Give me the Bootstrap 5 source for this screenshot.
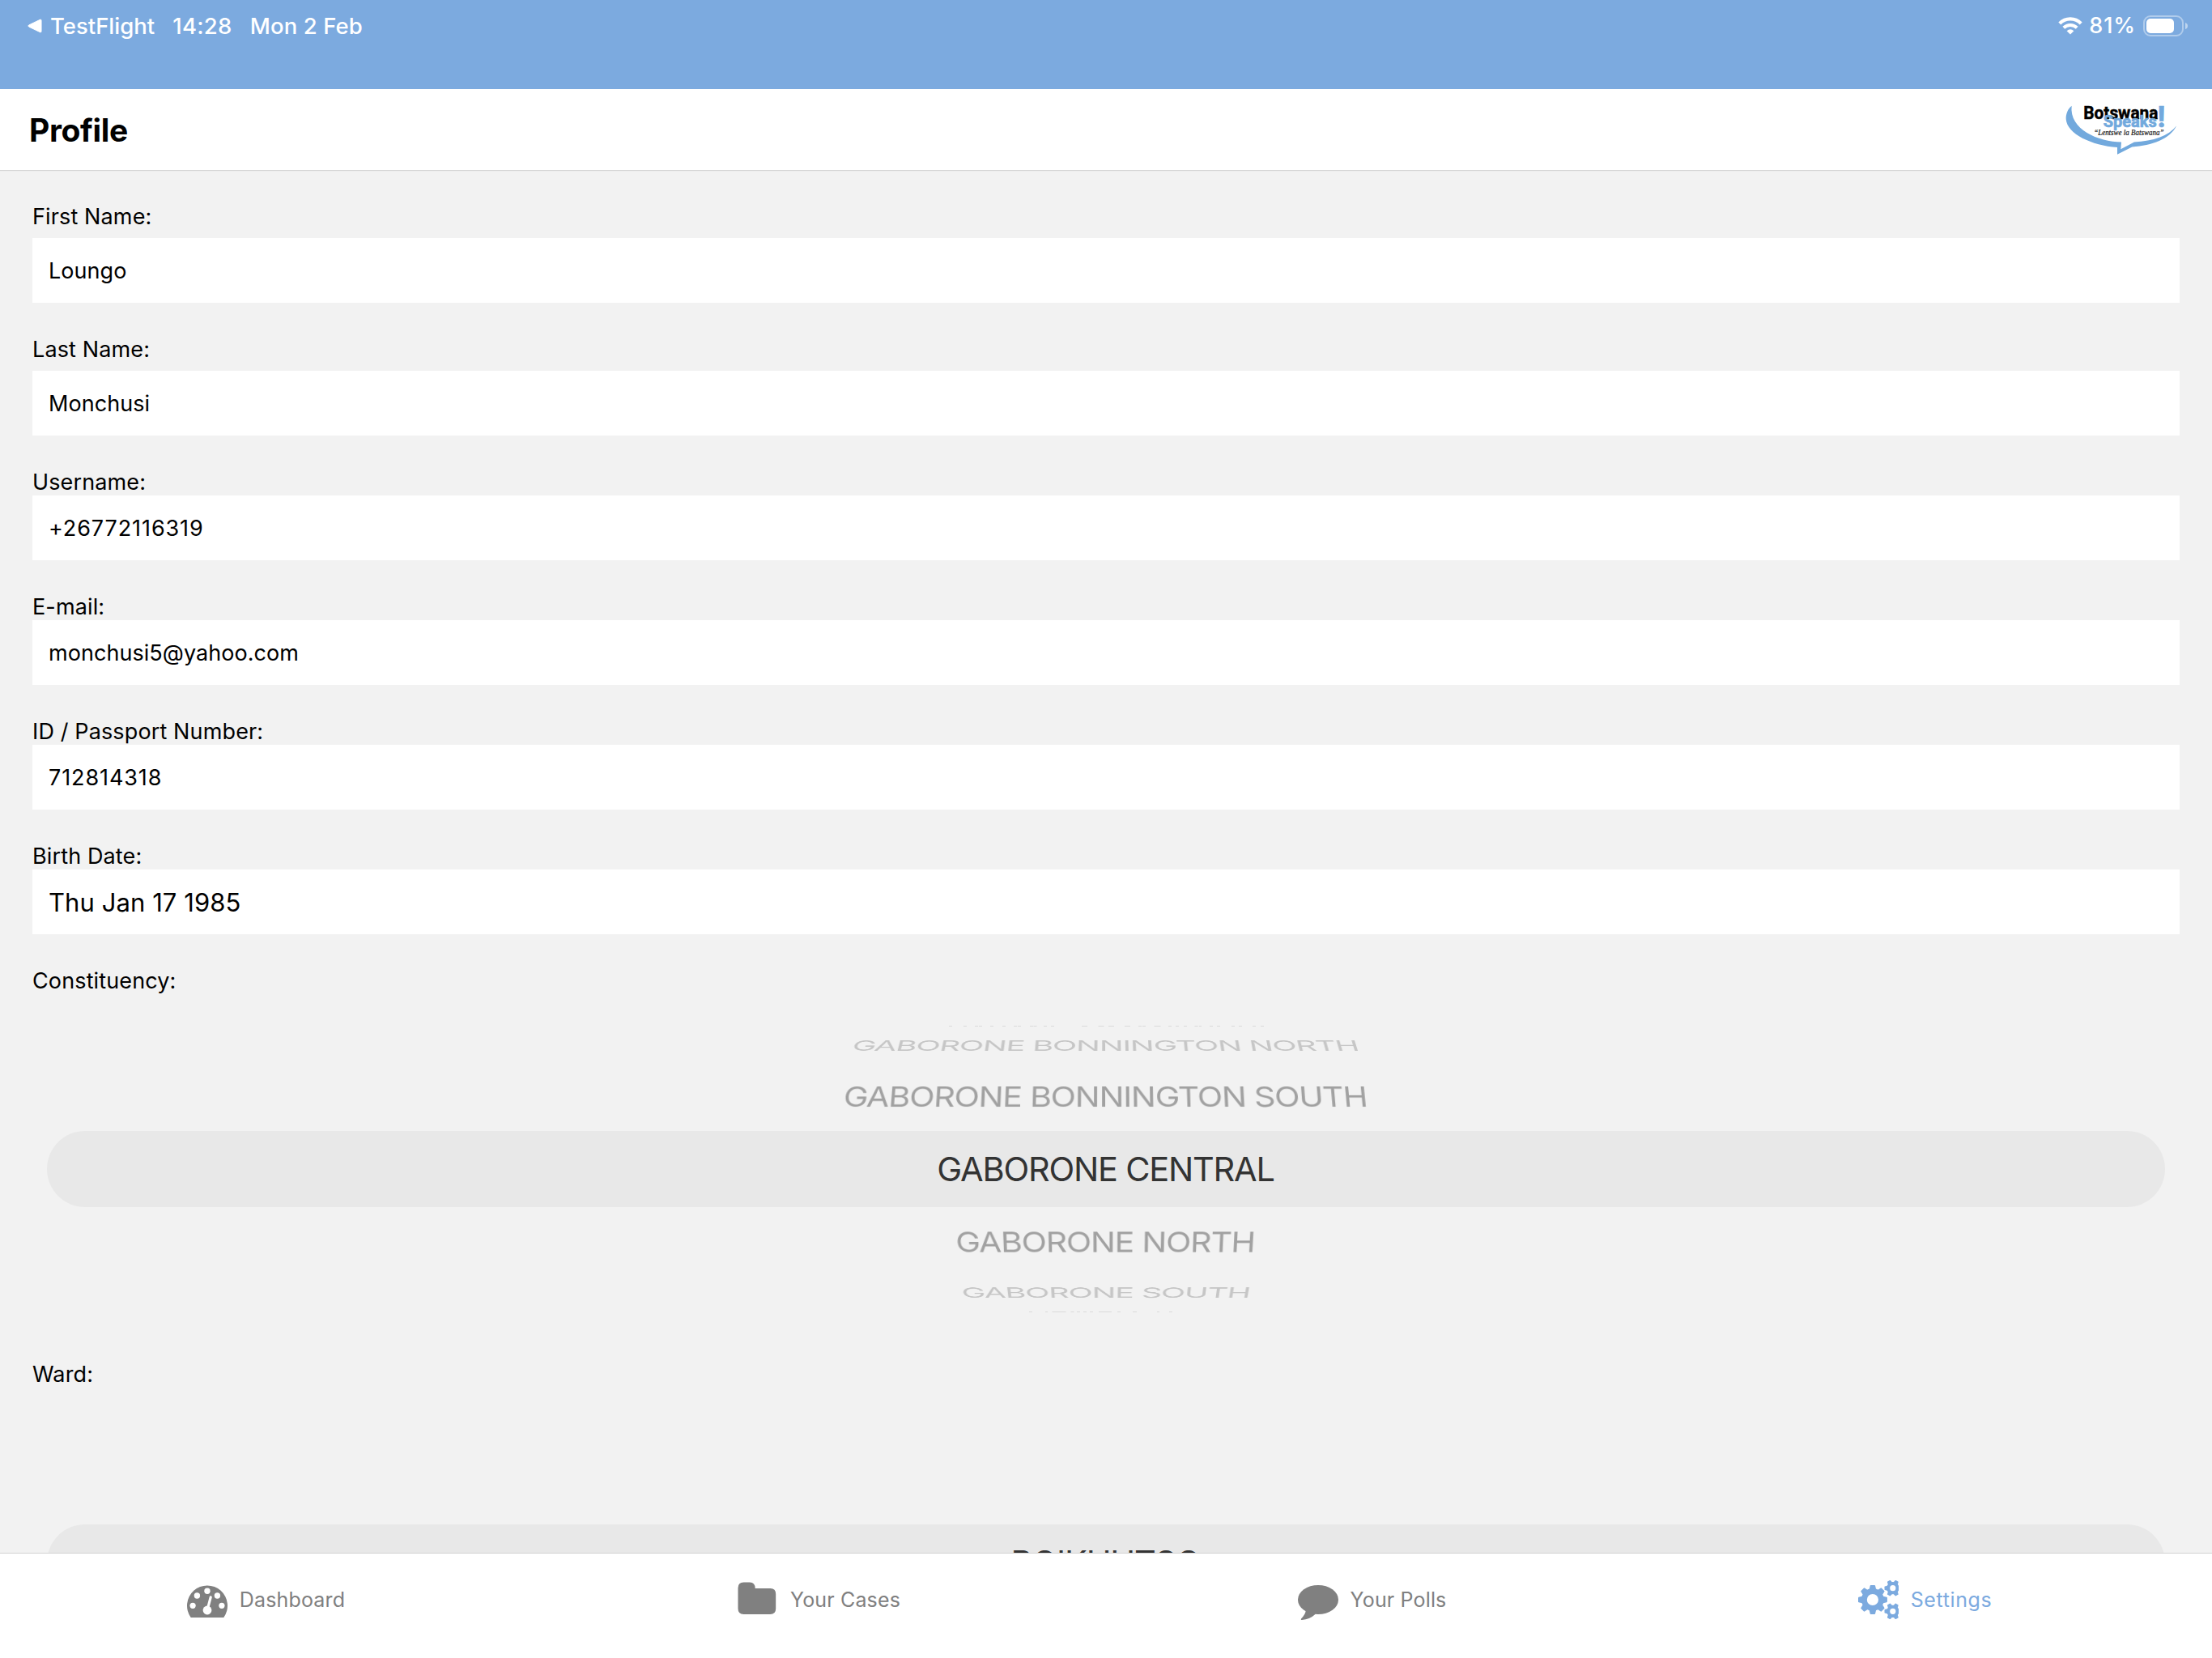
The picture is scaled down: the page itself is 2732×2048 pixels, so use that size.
<!DOCTYPE html>
<html lang="en">
<head>
<meta charset="utf-8">
<meta name="viewport" content="width=device-width, initial-scale=1">
<title>Profile</title>
<link rel="stylesheet" href="https://cdn.jsdelivr.net/npm/bootstrap@5.3.0/dist/css/bootstrap.min.css">
<style>
  body { font-family: Inter, "Open Sans", sans-serif; font-size: 27px; line-height: 34px; letter-spacing: .13px; color: #000; background: #f2f2f2; }
  .status-bar { height: 110px; background: #7caadf; color: #fff; font-size: 27.5px; font-weight: 500; letter-spacing: 0; padding: 0 29px 0 34px; }
  .status-row { height: 64px; }
  .back-app { gap: 10px; margin-right: 22px; }
  .clock { margin-right: 22px; letter-spacing: .3px; }
  .clock + span { letter-spacing: .1px; }
  .percent { margin: 0 9px 0 8px; letter-spacing: .9px; font-size: 27px; }
  .title-bar { height: 100px; background: #fff; padding: 0 42px 0 36px; box-shadow: 0 1px 1px #d5d5d5; }
  .title-bar h1 { font-size: 39px; font-weight: 700; letter-spacing: -.35px; line-height: 48px; padding-top: 1px; }
  .title-bar svg { margin-top: 1px; }
  .profile-form { padding: 40px 40px 0; }
  .field { margin-bottom: 40px; }
  .field label, .picker-label { display: block; height: 34px; line-height: 36px; }
  .field.spaced label { margin-bottom: 10px; }
  .field .form-control { height: 80px; padding: 0 20px; border: 0; font-size: 27px; letter-spacing: .05px; color: #000; background: #fff; }
  .field .form-control.digits { letter-spacing: .9px; }
  .field .form-control.birth { font-size: 31px; letter-spacing: .08px; }
  .wheel { display: grid; height: 432px; margin: 0 18px 20px; align-items: center; justify-items: center; }
  .wheel > * { grid-area: 1 / 1; }
  .wheel .band { width: 100%; height: 94px; background: #e8e8e8; }
  .wheel .item { font-size: 41.5px; line-height: 60px; letter-spacing: -1.22px; white-space: nowrap; color: #333; margin-right: 1px; }
  .wheel .near { color: #a1a1a1; }
  .wheel .far { color: #c6c6c6; }
  .wheel .up1 { transform: perspective(1860px) translateZ(-187px) rotateX(29deg) translateZ(187px); }
  .wheel .up2 { transform: perspective(1860px) translateZ(-187px) rotateX(58.8deg) translateZ(187px); }
  .wheel .down1 { transform: perspective(1860px) translateZ(-187px) rotateX(-29.2deg) translateZ(187px); }
  .wheel .down2 { transform: perspective(1860px) translateZ(-187px) rotateX(-58.9deg) translateZ(187px); }
  .tab-bar { height: 130px; background: #fff; border-top: 1px solid #d2d2d2; padding-bottom: 15px; font-size: 25px; letter-spacing: .15px; color: #808080; z-index: 5; }
  .tab-bar a { color: inherit; text-decoration: none; padding: 0 26px 0 0; gap: 15px; }
  .tab-bar a.active { color: #7caadf; letter-spacing: .6px; }
</style>
<script src="https://cdn.jsdelivr.net/npm/bootstrap@5.3.0/dist/js/bootstrap.bundle.min.js"></script>
</head>
<body>
<div class="vh-100 d-flex flex-column overflow-hidden">
  <div class="status-bar flex-shrink-0">
    <div class="status-row d-flex align-items-center justify-content-between">
      <div class="d-flex align-items-center">
        <span class="back-app d-flex align-items-center">
          <svg width="18" height="18" viewBox="0 0 18 18"><path d="M1.600 8 15.500 1.300Q17 .7 17 2.200V15.800Q17 17.300 15.500 16.700L1.600 10Q0 9 1.600 8Z" fill="#fff" stroke="#fff" stroke-width="1"/></svg>
          <span>TestFlight</span>
        </span>
        <span class="clock">14:28</span>
        <span>Mon 2 Feb</span>
      </div>
      <div class="d-flex align-items-center">
        <svg width="30" height="22" viewBox="0 0 30 22" fill="none" stroke="#fff"><path d="M1.800 8A18.500 18.500 0 0 1 28.200 8" stroke-width="4.200"/><path d="M6.800 13.200A11.800 11.800 0 0 1 23.200 13.200" stroke-width="4"/><path d="M10.600 17.200Q15 13.400 19.400 17.200L15 21.500Z" fill="#fff" stroke="none"/></svg>
        <span class="percent">81%</span>
        <svg width="56" height="26" viewBox="0 0 56 26"><rect x="1" y="1" width="48" height="24" rx="8" fill="none" stroke="#fff" stroke-opacity=".4" stroke-width="2"/><rect x="4" y="4" width="34" height="18" rx="5" fill="#fff"/><path d="M52 9Q55 10 55 13T52 17Z" fill="#fff" fill-opacity=".5"/></svg>
      </div>
    </div>
  </div>

  <header class="title-bar flex-shrink-0 d-flex align-items-center justify-content-between position-relative">
    <h1 class="mb-0">Profile</h1>
    <svg width="140" height="63" viewBox="150 385 420 190" overflow="visible">
      <path d="M175 390C161 401 153 420 154 440C158 495 250 538 345 545V571L400 543C475 537 540 515 566 464C535 503 480 521 408 525L358 552L360 525C275 524 165 478 175 390Z" fill="#72a9dd"/>
      <text x="219" y="438" font-family="Roboto" font-weight="700" font-size="68" letter-spacing="0" textLength="278" lengthAdjust="spacingAndGlyphs" stroke="#000" stroke-width="1.500">Botswana</text>
      <g fill="#72a9dd" font-family="Roboto" font-weight="700" letter-spacing="0" stroke="#72a9dd" stroke-width="2">
        <text x="293" y="470" font-size="62" textLength="199" lengthAdjust="spacingAndGlyphs">Speaks</text>
        <text x="494" y="470" font-size="112" textLength="30" lengthAdjust="spacingAndGlyphs">!</text>
      </g>
      <text x="258" y="501" font-family="Liberation Serif" font-style="italic" font-size="30" letter-spacing="0" textLength="260" lengthAdjust="spacingAndGlyphs" fill="#111" stroke="#111" stroke-width=".6">“Lentswe la Batswana”</text>
    </svg>
  </header>

  <main class="profile-form flex-grow-1 overflow-hidden">
    <div class="field spaced"><label for="first">First Name:</label><input id="first" class="form-control rounded-0" value="Loungo"></div>
    <div class="field spaced"><label for="last">Last Name:</label><input id="last" class="form-control rounded-0" value="Monchusi"></div>
    <div class="field"><label for="user">Username:</label><input id="user" class="form-control rounded-0 digits" value="+26772116319"></div>
    <div class="field"><label for="mail">E-mail:</label><input id="mail" class="form-control rounded-0" value="monchusi5@yahoo.com"></div>
    <div class="field"><label for="pass">ID / Passport Number:</label><input id="pass" class="form-control rounded-0 digits" value="712814318"></div>
    <div class="field"><label for="birth">Birth Date:</label><input id="birth" class="form-control rounded-0 birth" value="Thu Jan 17 1985"></div>

    <div class="picker-label">Constituency:</div>
    <div class="wheel">
      <div class="band rounded-pill"></div>
      <!-- rows turning over the rim of the wheel -->
      <svg width="400" height="356" viewBox="1166 1266 400 356" fill="none" stroke="#dadada" stroke-width="1">
        <path d="M1172 1267.500h4M1190 1267.500h4M1204 1267.500h4M1209 1267.500h4M1223 1267.500h4M1238 1267.500h4M1252 1267.500h4M1257 1267.500h4M1272 1267.500h4M1276.500 1267.500h4M1289 1267.500h4M1298 1267.500h4M1336 1267.500h7M1356.500 1267.500h7M1369 1267.500h7M1389 1267.500h7M1406 1267.500h4M1411 1267.500h4M1425.500 1267.500h8M1443 1267.500h4M1452 1267.500h4M1462 1267.500h4M1475.500 1267.500h4M1481 1267.500h3M1494 1267.500h4M1503 1267.500h4M1521 1267.500h4M1530 1267.500h4M1547 1267.500h4M1557 1267.500h4"/>
        <path d="M1271 1620.500h4M1291 1620.500h3M1299.500 1620.500h17M1322.500 1620.500h4M1330 1620.500h4M1338 1620.500h4M1346 1620.500h4M1357 1620.500h16M1380 1620.500h4M1399 1620.500h5M1429 1620.500h3M1444 1620.500h4"/>
      </svg>
      <div class="item far up2">GABORONE BONNINGTON NORTH</div>
      <div class="item near up1">GABORONE BONNINGTON SOUTH</div>
      <div class="item">GABORONE CENTRAL</div>
      <div class="item near down1">GABORONE NORTH</div>
      <div class="item far down2">GABORONE SOUTH</div>
    </div>

    <div class="picker-label">Ward:</div>
    <div class="wheel">
      <div class="band rounded-pill"></div>
      <div class="item">BOIKHUTSO</div>
    </div>
  </main>

  <nav class="tab-bar flex-shrink-0 d-flex nav nav-fill flex-nowrap">
    <a href="#" class="col-3 d-flex align-items-center justify-content-center">
      <svg width="50" height="50" viewBox="0 0 50 50"><path d="M4.700 47A25 25 0 1 1 45.300 47Z" fill="currentColor"/><g fill="#fff"><circle cx="25" cy="14.300" r="3.700"/><circle cx="12.400" cy="20" r="3.700"/><circle cx="37.400" cy="20" r="3.700"/><circle cx="7.100" cy="32.300" r="3.600"/><circle cx="42.900" cy="32.300" r="3.600"/><circle cx="25" cy="38" r="5.400"/></g><path d="M25.500 36 29.200 21.800" stroke="#fff" stroke-width="3.200" stroke-linecap="round"/></svg>
      <span>Dashboard</span>
    </a>
    <a href="#" class="col-3 d-flex align-items-center justify-content-center">
      <svg width="50" height="50" viewBox="0 0 50 50"><path d="M.5 10.500Q.5 3.500 7.500 3.500H15Q21.700 3.500 21.700 11H40.500Q47.200 11 47.200 18V36Q47.200 43 40.200 43H7.500Q.5 43 .5 36Z" fill="currentColor"/></svg>
      <span>Your Cases</span>
    </a>
    <a href="#" class="col-3 d-flex align-items-center justify-content-center">
      <svg width="50" height="50" viewBox="0 0 50 50" fill="currentColor"><ellipse cx="25" cy="25" rx="25" ry="18"/><path d="M9.800 38.500Q9 43.500 4.200 48.200Q3 49.900 5 50Q14.500 49.500 22 42.500Z"/></svg>
      <span>Your Polls</span>
    </a>
    <a href="#" class="active col-3 d-flex align-items-center justify-content-center">
      <svg width="50" height="50" viewBox="0 0 50 50" fill="currentColor">
        <defs>
          <path id="tooth" d="M-4.400-12 -3.200-17.300Q-3-18-2.300-18H2.300Q3-18 3.200-17.300L4.400-12Z"/>
          <path id="cogtooth" d="M-3.200-6 -2.200-9.900Q-2-10.300-1.500-10.300H1.500Q2-10.300 2.200-9.900L3.200-6Z"/>
          <g id="cog"><circle r="5.600" fill="none" stroke="currentColor" stroke-width="4"/><use href="#cogtooth" transform="rotate(-90)"/><use href="#cogtooth" transform="rotate(-30)"/><use href="#cogtooth" transform="rotate(30)"/><use href="#cogtooth" transform="rotate(90)"/><use href="#cogtooth" transform="rotate(150)"/><use href="#cogtooth" transform="rotate(210)"/></g>
        </defs>
        <g transform="translate(17.900 25)"><circle r="10.500" fill="none" stroke="currentColor" stroke-width="6.800"/><use href="#tooth"/><use href="#tooth" transform="rotate(45)"/><use href="#tooth" transform="rotate(90)"/><use href="#tooth" transform="rotate(135)"/><use href="#tooth" transform="rotate(180)"/><use href="#tooth" transform="rotate(225)"/><use href="#tooth" transform="rotate(270)"/><use href="#tooth" transform="rotate(315)"/></g>
        <use href="#cog" transform="translate(42.800 10.700)"/>
        <use href="#cog" transform="translate(42.800 39.300)"/>
      </svg>
      <span>Settings</span>
    </a>
  </nav>
</div>
</body>
</html>
